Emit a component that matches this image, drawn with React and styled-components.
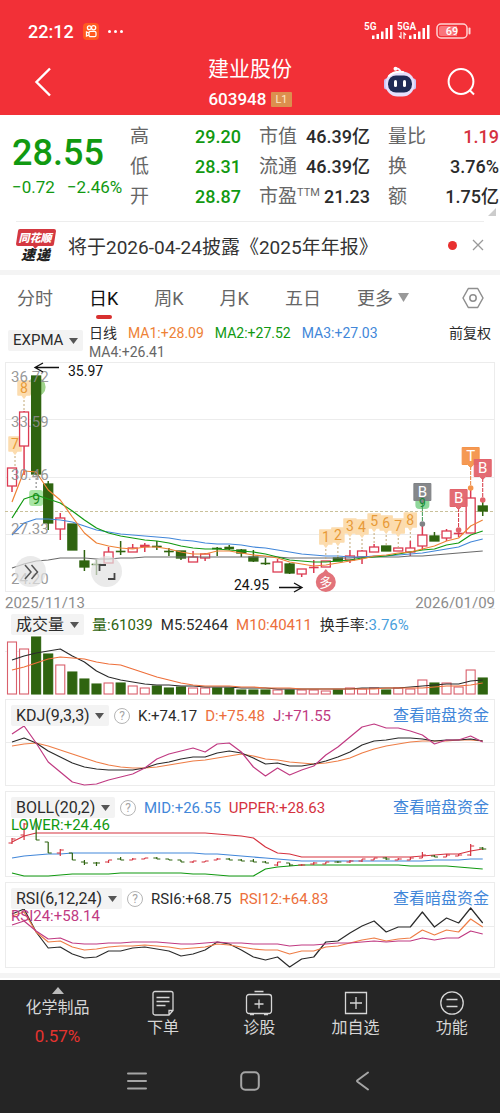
import React, { useState } from "react";
import styled, { createGlobalStyle } from "styled-components";

const GREEN = "#119911";
const DEEP_GREEN = "#2f6410";
const RED = "#d5323f";
const CANDLE_RED = "#dc3b52";
const ORANGE = "#ee8236";
const BLUE = "#4287d9";
const PURPLE = "#c03a82";
const DARK = "#2b2b2b";

const STEP = 12.07;
const xAt = (i) => 12 + i * STEP;
const toPoints = (values) => values.map((y, i) => `${xAt(i)},${y}`).join(" ");

// [direction, high, body top, body bottom, low]
const candles = [
  ["up", 468, 468, 486, 492], ["up", 411, 412, 446, 475], ["down", 376, 376, 474, 474],
  ["down", 481, 484, 523, 530], ["up", 513, 518, 529, 540], ["down", 524, 524, 550, 550],
  ["down", 550, 561, 567, 571], ["down", 560, 564, 565, 575], ["up", 547, 552, 563, 563],
  ["down", 541, 551, 552, 555], ["up", 544, 548, 552, 552], ["up", 543, 545, 547, 552],
  ["down", 541, 546, 547, 550], ["down", 548, 551, 552, 556], ["down", 551, 551, 558, 560],
  ["up", 551, 557, 562, 562], ["up", 553, 554, 558, 561], ["down", 547, 548, 549, 556],
  ["down", 545, 547, 549, 550], ["down", 549, 550, 553, 557], ["down", 550, 557, 561, 562],
  ["down", 558, 563, 564, 565], ["up", 559, 562, 572, 572], ["down", 563, 564, 573, 574],
  ["up", 569, 569, 574, 577], ["up", 560, 567, 568, 573], ["up", 561, 561, 567, 567],
  ["down", 557, 558, 561, 561], ["up", 550, 556, 560, 563], ["up", 550, 551, 557, 564],
  ["up", 544, 547, 552, 552], ["down", 546, 546, 551, 551], ["up", 548, 548, 551, 551],
  ["up", 541, 548, 552, 556], ["up", 524, 535, 546, 550], ["down", 532, 536, 541, 541],
  ["up", 529, 531, 538, 541], ["up", 529, 533, 534, 537], ["up", 488, 498, 533, 533],
  ["down", 500, 506, 511, 516],
];

const ma1 = [502, 471, 472, 490, 500, 517, 533, 543, 546, 548, 549, 547, 547, 549, 552, 554, 554, 551, 551, 553, 555, 556, 558, 562, 564, 566, 565, 563, 561, 559, 556, 555, 553, 552, 549, 546, 541, 538, 526, 520];
const ma2 = [518, 499, 495, 499, 503, 511, 520, 528, 533, 536, 538, 540, 541, 543, 546, 548, 549, 549, 550, 551, 552, 554, 557, 560, 561, 562, 562, 561, 560, 558, 557, 556, 554, 552, 550, 549, 545, 543, 535, 531];
const ma3 = [535, 523, 519, 519, 520, 522, 526, 530, 532, 534, 535, 536, 537, 538, 540, 541, 543, 544, 544, 545, 547, 548, 550, 552, 554, 555, 556, 556, 557, 557, 556, 556, 555, 554, 553, 551, 549, 547, 542, 539];
const ma4 = [568, 564, 561, 560, 558, 558, 558, 559, 559, 558, 558, 557, 557, 557, 557, 557, 557, 557, 557, 557, 557, 557, 557, 558, 558, 558, 558, 558, 558, 557, 557, 557, 557, 556, 556, 555, 554, 553, 552, 551];

const volumes = [642, 649, 637, 654, 665, 672, 679, 684, 683, 683, 686, 688, 686, 688, 687, 688, 688, 688, 688, 690, 690, 690, 690, 690, 690, 690, 691, 690, 688, 689, 688, 690, 688, 689, 680, 683, 683, 687, 670, 678];
const volM5 = [660, 656, 653, 651, 649, 656, 662, 671, 677, 680, 682, 684, 685, 685, 686, 686, 687, 687, 687, 688, 688, 688, 689, 689, 689, 689, 689, 689, 689, 688, 688, 688, 688, 687, 686, 685, 684, 684, 681, 680];
const volM10 = [670, 667, 663, 659, 657, 658, 659, 662, 664, 665, 669, 673, 677, 680, 683, 685, 686, 686, 686, 687, 687, 688, 688, 688, 689, 689, 689, 689, 689, 689, 689, 688, 688, 688, 688, 687, 686, 686, 685, 683];

const kLine = [742, 738, 743, 751, 757, 763, 767, 769, 770, 770, 770, 768, 764, 762, 759, 757, 757, 753, 751, 753, 758, 764, 763, 766, 766, 764, 761, 757, 752, 745, 741, 740, 738, 738, 739, 741, 740, 740, 739, 741];
const dLine = [746, 744, 743, 746, 750, 754, 758, 762, 765, 767, 768, 768, 767, 765, 763, 761, 760, 758, 756, 754, 756, 759, 760, 762, 763, 764, 763, 761, 758, 753, 749, 746, 744, 742, 741, 741, 741, 740, 740, 741];
const jLine = [734, 726, 743, 762, 772, 782, 785, 784, 780, 777, 774, 768, 759, 754, 751, 748, 752, 744, 743, 752, 767, 776, 768, 775, 770, 766, 755, 747, 737, 727, 724, 728, 728, 731, 735, 744, 740, 740, 736, 742];

const bollUpper = [842, 836, 833, 833, 833, 833, 833, 833, 833, 833, 833, 833, 833, 833, 833, 833, 833, 834, 835, 836, 838, 847, 853, 854, 857, 857, 857, 857, 857, 857, 857, 857, 857, 857, 856, 855, 854, 854, 851, 849];
const bollMid = [858, 856, 855, 854, 854, 853, 853, 853, 853, 853, 853, 853, 853, 853, 853, 853, 854, 854, 855, 856, 857, 858, 859, 860, 861, 861, 861, 861, 861, 861, 861, 861, 861, 861, 861, 860, 860, 860, 859, 859];
const bollLower = [873, 876, 876, 876, 875, 874, 874, 874, 874, 873, 873, 873, 873, 873, 873, 874, 874, 875, 876, 876, 876, 869, 867, 866, 865, 865, 865, 865, 865, 865, 865, 865, 865, 866, 866, 866, 866, 867, 868, 869];
// [direction, high, low, open, close]
const bollBars = [
  ["up", 838, 844, 843, 839], ["up", 823, 840, 835, 824], ["down", 815, 840, 816, 840],
  ["down", 842, 853, 842, 853], ["up", 849, 856, 853, 850], ["down", 853, 860, 853, 860],
  ["down", 860, 865, 862, 863], ["down", 862, 866, 863, 863], ["up", 860, 863, 862, 860],
  ["down", 857, 860, 859, 860], ["up", 858, 860, 860, 859], ["up", 858, 859, 859, 858],
  ["down", 857, 859, 858, 859], ["down", 859, 860, 859, 860], ["down", 860, 862, 860, 862],
  ["up", 861, 863, 862, 861], ["up", 861, 862, 862, 861], ["up", 858, 860, 860, 859],
  ["down", 858, 860, 859, 860], ["down", 859, 861, 860, 861], ["down", 859, 862, 861, 862],
  ["down", 861, 863, 862, 863], ["up", 862, 866, 865, 862], ["down", 863, 866, 863, 865],
  ["up", 864, 866, 865, 865], ["up", 862, 865, 864, 863], ["up", 862, 864, 864, 862],
  ["down", 861, 863, 862, 862], ["up", 860, 863, 862, 861], ["up", 859, 862, 861, 859],
  ["up", 858, 860, 860, 858], ["down", 857, 860, 858, 859], ["up", 858, 860, 860, 859],
  ["up", 857, 860, 860, 858], ["up", 852, 858, 858, 855], ["down", 855, 857, 856, 857],
  ["up", 854, 857, 857, 855], ["up", 854, 856, 856, 855], ["up", 844, 856, 855, 846],
  ["down", 847, 850, 848, 849],
];

const rsi6 = [914, 909, 932, 948, 947, 954, 958, 957, 951, 951, 948, 947, 949, 951, 956, 954, 950, 942, 944, 950, 957, 960, 957, 967, 959, 957, 942, 941, 933, 926, 921, 932, 927, 927, 912, 927, 918, 923, 908, 923];
const rsi12 = [916, 912, 932, 942, 941, 947, 950, 949, 947, 946, 946, 945, 946, 947, 949, 948, 947, 944, 945, 947, 949, 950, 950, 954, 951, 951, 947, 946, 943, 940, 938, 941, 939, 938, 930, 935, 930, 932, 919, 927];
const rsi24 = [925, 921, 931, 939, 938, 943, 944, 944, 943, 943, 942, 942, 942, 943, 944, 944, 943, 942, 943, 943, 944, 944, 944, 946, 945, 945, 944, 943, 943, 942, 941, 942, 941, 941, 938, 940, 938, 938, 931, 934];

const counts = [
  { i: 26, n: 1, y: 537 }, { i: 27, n: 2, y: 535 }, { i: 28, n: 3, y: 526 }, { i: 29, n: 4, y: 527 },
  { i: 30, n: 5, y: 521 }, { i: 31, n: 6, y: 523 }, { i: 32, n: 7, y: 526 }, { i: 33, n: 8, y: 520 },
];

const flags = [
  { i: 34, label: "B", y: 492, dot: 524, color: "#7f8285", line: "#3f9a55" },
  { i: 37, label: "B", y: 498, dot: 530, color: "#e2636b", line: "#d5323f" },
  { i: 38, label: "T", y: 456, dot: 488, color: "#f4944a", line: "#e8823c" },
  { i: 39, label: "B", y: 468, dot: 500, color: "#e2636b", line: "#d5323f" },
];

const quoteRows = [
  ["高", "29.20", GREEN], ["市值", "46.39亿"], ["量比", "1.19", RED],
  ["低", "28.31", GREEN], ["流通", "46.39亿"], ["换", "3.76%"],
  ["开", "28.87", GREEN], ["市盈", "21.23"], ["额", "1.75亿"],
];

const tabs = ["分时", "日K", "周K", "月K", "五日"];

export default function App() {
  const [activeTab, setActiveTab] = useState("日K");

  return (
    <Page>
      <GlobalStyle />
      <Header>
        <StatusBar>
          <Clock>22:12</Clock>
          <CameraIcon />
          <Dots>
            <i />
            <i />
            <i />
          </Dots>
          <StatusRight>
            <SignalIcon />
            <BatteryIcon />
          </StatusRight>
        </StatusBar>
        <TitleBar>
          <BackButton aria-label="返回">
            <svg width="18" height="30" viewBox="0 0 18 30" fill="none" stroke="#fff" strokeWidth="2.4">
              <path d="M16 1.5 2.5 15 16 28.5" />
            </svg>
          </BackButton>
          <TitleBlock>
            <StockName>建业股份</StockName>
            <StockCode>
              603948<Level>L1</Level>
            </StockCode>
          </TitleBlock>
          <TitleActions>
            <IconButton aria-label="智能助手">
              <RobotIcon />
            </IconButton>
            <IconButton aria-label="搜索">
              <svg width="30" height="30" viewBox="0 0 30 30" fill="none" stroke="#fff" strokeWidth="2">
                <circle cx="15" cy="14.5" r="12.4" />
                <path d="m23.500 23 4.500 4.500" />
              </svg>
            </IconButton>
          </TitleActions>
        </TitleBar>
      </Header>

      <Quote>
        <PriceBlock>
          <Price>28.55</Price>
          <Change>
            <span>−0.72</span>
            <span>−2.46%</span>
          </Change>
        </PriceBlock>
        <Stats>
          {quoteRows.map(([label, value, color]) => (
            <Stat key={label}>
              <StatLabel>
                {label}
                {label === "市盈" && <sup>TTM</sup>}
              </StatLabel>
              <StatValue $color={color}>{value}</StatValue>
            </Stat>
          ))}
        </Stats>
        <Corner />
      </Quote>

      <News>
        <NewsLogo />
        <NewsLink href="#news">将于2026-04-24披露《2025年年报》</NewsLink>
        <RedDot />
        <button aria-label="关闭">
          <svg width="12" height="12" viewBox="0 0 12 12" stroke="#999" strokeWidth="1.3">
            <path d="m1 1 10 10M11 1 1 11" />
          </svg>
        </button>
      </News>
      <Divider />

      <Tabs>
        {tabs.map((tab) => (
          <Tab key={tab} $active={tab === activeTab} onClick={() => setActiveTab(tab)}>
            {tab}
          </Tab>
        ))}
        <Tab aria-haspopup="menu">
          更多
          <Caret width="11" height="9" viewBox="0 0 11 9" fill="#999">
            <path d="M0 0h11L5.500 9z" />
          </Caret>
        </Tab>
        <Settings aria-label="设置">
          <svg width="22" height="22" viewBox="0 0 22 22" fill="none" stroke="#8e8e8e" strokeWidth="1.5">
            <path d="M6.300 1.500h9.400L21 11l-5.300 9.500H6.300L1 11z" strokeLinejoin="round" />
            <circle cx="11" cy="11" r="3.200" />
          </svg>
        </Settings>
      </Tabs>

      <IndicatorRow>
        <Picker name="EXPMA" />
        <Averages>
          <Value $color={DARK}>日线</Value>
          <Value $color={ORANGE}>MA1:+28.09</Value>
          <Value $color={GREEN}>MA2:+27.52</Value>
          <Value $color={BLUE}>MA3:+27.03</Value>
          <Value $color="#666">MA4:+26.41</Value>
        </Averages>
        <Adjust>前复权</Adjust>
      </IndicatorRow>

      <MainPanel>
        <CandleChart />
        <RoundButton $left={10} aria-label="展开">
          <svg width="18" height="18" viewBox="0 0 18 18" fill="none" stroke="#555" strokeWidth="1.5">
            <path d="m3 2 6 7-6 7M9.500 2l6 7-6 7" />
          </svg>
        </RoundButton>
        <RoundButton $left={86} aria-label="全屏">
          <svg width="18" height="18" viewBox="0 0 18 18" fill="none" stroke="#444" strokeWidth="1.800">
            <path d="M1.500 8V2H8M16.500 10v6H10" />
          </svg>
        </RoundButton>
      </MainPanel>
      <Dates>
        <span>2025/11/13</span>
        <span>2026/01/09</span>
      </Dates>

      <Panel>
        <VolumeChart />
        <PanelHead>
          <Legend>
            <Picker name="成交量" large />
            <Value $color={DEEP_GREEN} $large>量:61039</Value>
            <Value $color={DARK} $large>M5:52464</Value>
            <Value $color="#ec6f3c" $large>M10:40411</Value>
            <Value $color={DARK} $large>
              换手率:<Rate>3.76%</Rate>
            </Value>
          </Legend>
        </PanelHead>
      </Panel>

      <IndicatorPanel
        name="KDJ(9,3,3)"
        values={[["K:+74.17", DARK], ["D:+75.48", "#ec6f3c"], ["J:+71.55", PURPLE]]}
      >
        <Chart viewBox="5 699 490 87">
          <GridLine y={742} />
          <Line values={dLine} color="#ee7d46" />
          <Line values={kLine} color={DARK} />
          <Line values={jLine} color={PURPLE} />
        </Chart>
      </IndicatorPanel>

      <IndicatorPanel
        name="BOLL(20,2)"
        values={[["MID:+26.55", BLUE], ["UPPER:+28.63", RED], ["LOWER:+24.46", GREEN]]}
      >
        <Chart viewBox="5 791 490 86">
          <GridLine y={836} />
          <Line values={bollUpper} color={RED} />
          <Line values={bollMid} color={BLUE} />
          <Line values={bollLower} color={GREEN} />
          {bollBars.map(([dir, high, low, open, close], i) => (
            <path
              key={i}
              d={`M${xAt(i)} ${high}V${low}M${xAt(i) - 3.5} ${open}H${xAt(i)}M${xAt(i)} ${close}H${xAt(i) + 3.5}`}
              stroke={dir === "up" ? RED : DEEP_GREEN}
              strokeWidth="1.2"
            />
          ))}
        </Chart>
      </IndicatorPanel>

      <IndicatorPanel
        name="RSI(6,12,24)"
        values={[["RSI6:+68.75", DARK], ["RSI12:+64.83", "#ec6f3c"], ["RSI24:+58.14", PURPLE]]}
      >
        <Chart viewBox="5 882 490 86">
          <GridLine y={926} />
          <Line values={rsi6} color={DARK} />
          <Line values={rsi12} color="#ee7d46" />
          <Line values={rsi24} color={PURPLE} />
        </Chart>
      </IndicatorPanel>
      <BottomStrip />

      <Footer>
        <ActionBar>
          <Sector>
            <svg width="12" height="7" viewBox="0 0 12 7" fill="#bbb">
              <path d="M6 0l6 7H0z" />
            </svg>
            <span>化学制品</span>
            <SectorRate>0.57%</SectorRate>
          </Sector>
          <Action>
            <svg width="24" height="26" viewBox="0 0 24 26">
              <path d="M4 1.500h16a2 2 0 0 1 2 2v17L18 25H4a2 2 0 0 1-2-2V3.500a2 2 0 0 1 2-2zM22 20.500h-4V25M5.500 7.500h13M5.500 11.500h13M5.500 15.500h9" />
            </svg>
            下单
          </Action>
          <Action>
            <svg width="28" height="26" viewBox="0 0 28 26">
              <path d="M9.500 1.500h9M4 4.500h20a2.500 2.500 0 0 1 2.500 2.500v14a2.500 2.500 0 0 1-2.500 2.500H4A2.500 2.500 0 0 1 1.500 21V7A2.500 2.500 0 0 1 4 4.500zM5 24.500h4M19 24.500h4M14 9.500v9M9.500 14h9" />
            </svg>
            诊股
          </Action>
          <Action>
            <svg width="24" height="26" viewBox="0 0 24 26">
              <path d="M1.500 2.500h21v21h-21zM12 7v12M6 13h12" />
            </svg>
            加自选
          </Action>
          <Action>
            <svg width="26" height="26" viewBox="0 0 26 26">
              <circle cx="13" cy="13" r="11.200" />
              <path d="M7.500 9.500h11M7.500 16.500h11" />
            </svg>
            功能
          </Action>
        </ActionBar>
        <SystemNav>
          <button aria-label="最近任务">
            <svg width="20" height="20" viewBox="0 0 20 20">
              <path d="M1 2.500h18M1 10h18M1 17.500h18" />
            </svg>
          </button>
          <button aria-label="主屏幕">
            <svg width="20" height="20" viewBox="0 0 20 20">
              <rect x="1.200" y="1.200" width="17.600" height="17.600" rx="4" />
            </svg>
          </button>
          <button aria-label="后退">
            <svg width="20" height="20" viewBox="0 0 20 20">
              <path d="M15 1.500 4.500 9.200q-1 .8 0 1.600L15 18.500" />
            </svg>
          </button>
        </SystemNav>
      </Footer>
    </Page>
  );
}

function Picker({ name, large }) {
  return (
    <PickerBox>
      <PickerSelect aria-label={name} $large={large}>
        <option>{name}</option>
      </PickerSelect>
      <svg width="9" height="6" viewBox="0 0 9 6" fill="#555">
        <path d="M0 0h9L4.500 6z" />
      </svg>
    </PickerBox>
  );
}

function IndicatorPanel({ name, values, children }) {
  return (
    <Panel $framed>
      {children}
      <PanelHead>
        <Legend>
          <Picker name={name} large />
          <Help aria-label="说明">?</Help>
          {values.map(([text, color]) => (
            <Value key={text} $color={color} $large>
              {text}
            </Value>
          ))}
        </Legend>
        <FundLink href="#fund">查看暗盘资金</FundLink>
      </PanelHead>
    </Panel>
  );
}

const Line = ({ values, color }) => (
  <polyline points={toPoints(values)} fill="none" stroke={color} strokeWidth="1.2" strokeLinejoin="round" />
);

const GridLine = ({ y }) => <path d={`M5 ${y + 0.5}H495`} stroke="#ececec" strokeWidth="1" />;

function CandleChart() {
  return (
    <Chart viewBox="5 362 490 230">
      <GridLine y={419} />
      <GridLine y={477} />
      <GridLine y={534} />
      <path d="M5 511.500H495" stroke="#c9c09a" strokeWidth="1" strokeDasharray="3 2" />

      <circle cx={xAt(2)} cy="387" r="9.500" fill="#9fd38c" />
      <CountBadge x={15} y={444} n={7} bottom={468} />
      <CountBadge x={24} y={388} n={8} bottom={411} />
      <path d={`M${xAt(2)} 474V490`} stroke="#777" strokeDasharray="2 2" />
      <rect x={xAt(2) - 7} y="490" width="14" height="16" rx="3" fill="#a9e6a4" />
      <text x={xAt(2)} y="504" fontSize="14" fill="#1d8a1d" textAnchor="middle">9</text>

      {candles.map(([dir, high, top, bottom, low], i) => {
        const up = dir === "up";
        const color = up ? CANDLE_RED : DEEP_GREEN;
        const thin = bottom - top < 3;
        return (
          <g key={i}>
            <path d={`M${xAt(i)} ${high}V${top}M${xAt(i)} ${bottom}V${low}`} stroke={color} strokeWidth="1.5" />
            <rect
              x={xAt(i) - 4.5}
              y={top}
              width="9"
              height={bottom - top}
              fill={up && !thin ? "#fff" : color}
              stroke={color}
              strokeWidth={thin ? 0.6 : 1.3}
            />
          </g>
        );
      })}

      <Line values={ma4} color="#6a6a6a" />
      <Line values={ma3} color={BLUE} />
      <Line values={ma2} color={GREEN} />
      <Line values={ma1} color={ORANGE} />

      {counts.map(({ i, n, y }) => (
        <CountBadge key={i} x={xAt(i)} y={y} n={n} bottom={candles[i][1]} />
      ))}

      <rect x={xAt(34) - 7} y="496" width="14" height="13" rx="4" fill="#8fd79b" />
      {flags.map(({ i, label, y, dot, color, line }) => (
        <g key={i}>
          <path d={`M${xAt(i)} ${y + 10}V${dot}`} stroke={line} strokeDasharray="4 1" />
          <circle cx={xAt(i)} cy={dot} r="2.800" fill={color} />
          <path
            d={`M${xAt(i) - 8.5} ${y - 8.5}h17v17h-5.500l-3 3-3-3h-5.500z`}
            fill={color}
            stroke={color}
            strokeLinejoin="round"
            fillOpacity="0.95"
          />
          <text x={xAt(i)} y={y + 5} fontSize="15" fill="#fff" textAnchor="middle">{label}</text>
        </g>
      ))}
      <text x={xAt(34)} y="507" fontSize="12" fill="#148a35" textAnchor="middle">9</text>

      <path d={`M${xAt(26)} 569l4 5h-8z`} fill="#e2737a" />
      <circle cx={xAt(26)} cy="582" r="10" fill="#e2737a" />
      <text x={xAt(26)} y="587" fontSize="13" fill="#fff" textAnchor="middle">多</text>

      {[["36.72", 382], ["33.59", 427], ["30.46", 480], ["27.33", 534], ["24.20", 584]].map(([text, y]) => (
        <text key={text} x="11" y={y} fontSize="15" fill="#8c8c8c" fillOpacity="0.9">{text}</text>
      ))}

      <text x="68" y="376" fontSize="14" fill="#111">35.97</text>
      <path d="M59 367.500H36M43 363l-8 4.500 8 4.500" fill="none" stroke="#111" strokeWidth="1.3" />
      <text x="234" y="590" fontSize="14" fill="#111">24.95</text>
      <path d="M279 587.500H301M294 583l8 4.500-8 4.500" fill="none" stroke="#111" strokeWidth="1.3" />
    </Chart>
  );
}

function CountBadge({ x, y, n, bottom }) {
  return (
    <g>
      <path d={`M${x} ${y + 8}V${bottom}`} stroke="#c2a877" strokeDasharray="2 2" />
      <path
        d={`M${x - 6} ${y - 7}h12v14h-4l-2 3-2-3h-4z`}
        fill="#fcdcae"
        stroke="#fcdcae"
        strokeWidth="1.500"
        strokeLinejoin="round"
      />
      <text x={x} y={y + 5} fontSize="14" fill="#e89a37" textAnchor="middle">{n}</text>
    </g>
  );
}

function VolumeChart() {
  return (
    <Chart viewBox="5 608 490 87">
      <GridLine y={608} />
      <GridLine y={651} />
      {volumes.map((top, i) => {
        const up = candles[i][0] === "up";
        const color = up ? "#d9606c" : DEEP_GREEN;
        return (
          <rect
            key={i}
            x={xAt(i) - 4.5}
            y={top}
            width="9"
            height={694 - top}
            fill={up ? "#fff" : color}
            stroke={color}
            strokeWidth="1.1"
          />
        );
      })}
      <Line values={volM5} color={DARK} />
      <Line values={volM10} color="#ee6f3a" />
    </Chart>
  );
}

const CameraIcon = () => (
  <svg width="16" height="17" viewBox="0 0 16 17" fill="none">
    <rect width="16" height="17" rx="4" fill="#ff5a1f" />
    <g stroke="#fff" strokeWidth="1.3">
      <circle cx="6.300" cy="4.800" r="1.900" />
      <circle cx="10.600" cy="4.800" r="2.100" />
      <rect x="6" y="8.300" width="7" height="5.400" rx="1.500" />
      <path d="M6 10 3.500 8.900v4.200L6 12" />
    </g>
  </svg>
);

const SignalIcon = () => (
  <svg width="68" height="18" viewBox="0 0 68 18" fill="#fff">
    <text x="0" y="8" fontSize="10" fontWeight="600">5G</text>
    <text x="33" y="8" fontSize="10" fontWeight="600">5GA</text>
    <path d="M8 13.500h2.500V17H8zM12.500 12H15v5h-2.500zM17 9.500h2.500V17H17zM21.500 6H24v11h-2.500zM26 3h2.500v14H26z" />
    <path d="M45 13.500h2.500V17H45zM49.500 12H52v5h-2.500zM54 9.500h2.500V17H54zM58.500 6H61v11h-2.500zM63 3h2.500v14H63z" />
    <path d="M37 10v6l-2-2M40 17v-6l2 2" fill="none" stroke="#fff" strokeWidth="1.100" />
  </svg>
);

const BatteryIcon = () => (
  <svg width="36" height="16" viewBox="0 0 36 16" fill="none">
    <rect x="1" y="1" width="30" height="14" rx="4" stroke="#ffd3d3" strokeWidth="1.500" />
    <path d="M5 3h16v10H5a2 2 0 0 1-2-2V5a2 2 0 0 1 2-2z" fill="#f9757b" />
    <path d="M33.500 5.500v5" stroke="#ffd3d3" strokeWidth="2" strokeLinecap="round" />
    <text x="16" y="12" fontSize="11" fontWeight="500" fill="#fff" textAnchor="middle">69</text>
  </svg>
);

const RobotIcon = () => (
  <svg width="34" height="32" viewBox="0 0 34 32" fill="none">
    <path d="M17.500 7q0-4-4-4.500" stroke="#f3efff" strokeWidth="2" />
    <circle cx="12.500" cy="2.800" r="2" fill="#fff" />
    <rect x="1" y="12.500" width="5" height="11" rx="2.500" fill="#c9c2f6" />
    <rect x="28" y="12.500" width="5" height="11" rx="2.500" fill="#c9c2f6" />
    <rect x="2.500" y="5.500" width="29" height="25" rx="12" fill="#e6dffc" />
    <path d="M6 10q5-5 14-4" stroke="#fff" strokeWidth="2" strokeLinecap="round" />
    <rect x="5" y="9.500" width="24" height="17" rx="8" fill="#1f2a55" />
    <rect x="11" y="14" width="3" height="7" rx="1.500" fill="#fff" />
    <rect x="20" y="14" width="3" height="7" rx="1.500" fill="#fff" />
  </svg>
);

const NewsLogo = () => (
  <svg width="40" height="34" viewBox="0 0 40 34" fontWeight="900" fontStyle="italic">
    <path d="M4 1h34q2 0 2 2l-2 13q0 2-2 2H22l-3 3-2-3H2q-2 0-2-2L2 3q0-2 2-2z" fill="#d43840" />
    <text x="19" y="14" fontSize="11" fill="#fff" textAnchor="middle">同花顺</text>
    <text x="5" y="32" fontSize="14" fill="#222">速</text>
    <text x="20" y="32" fontSize="14" fill="#222">递</text>
  </svg>
);

const GlobalStyle = createGlobalStyle`
  * {
    box-sizing: border-box;
  }
  body {
    margin: 0;
    background: #fff;
    font-family: Roboto, "Noto Sans CJK SC", sans-serif;
    color: ${DARK};
  }
  button {
    padding: 0;
    border: none;
    background: none;
    font-family: inherit;
    color: inherit;
    cursor: pointer;
  }
  svg {
    display: block;
  }
`;

const Page = styled.div`
  display: flex;
  flex-direction: column;
  min-height: 100vh;
`;

const Header = styled.header`
  padding: 18px 22px 0;
  background: #f23037;
  color: #fff;
`;

const StatusBar = styled.div`
  display: flex;
  align-items: center;
  gap: 9px;
  height: 26px;
  padding: 0 6px;
`;

const Clock = styled.span`
  font-size: 18px;
  font-weight: 500;
`;

const Dots = styled.span`
  display: flex;
  gap: 3px;

  i {
    width: 3px;
    height: 3px;
    border-radius: 50%;
    background: #fff;
  }
`;

const StatusRight = styled.div`
  display: flex;
  align-items: center;
  gap: 4px;
  margin-left: auto;
`;

const TitleBar = styled.div`
  display: grid;
  grid-template-columns: 1fr auto 1fr;
  align-items: center;
  height: 71px;
  padding-top: 5px;
`;

const IconButton = styled.button`
  padding: 0 2px;
`;

const BackButton = styled.button`
  justify-self: start;
  padding: 0 12px;
`;

const TitleBlock = styled.div`
  display: flex;
  flex-direction: column;
  align-items: center;
  gap: 4px;
`;

const StockName = styled.h1`
  margin: 0;
  font-size: 21px;
  font-weight: 400;
  line-height: 30px;
`;

const StockCode = styled.div`
  display: flex;
  align-items: center;
  gap: 5px;
  font-size: 17px;
  font-weight: 500;
  line-height: 22px;
`;

const Level = styled.span`
  padding: 0 4px;
  border-radius: 1px;
  background: #dc8f4e;
  color: #ffe9c9;
  font-size: 11px;
  font-weight: 400;
  line-height: 15px;
`;

const TitleActions = styled.div`
  display: flex;
  align-items: center;
  justify-content: flex-end;
  gap: 25px;
`;

const Quote = styled.section`
  position: relative;
  display: grid;
  grid-template-columns: 118px 1fr;
  padding: 8px 1px 8px 12px;
`;

const PriceBlock = styled.div`
  display: flex;
  flex-direction: column;
  gap: 3px;
  padding-top: 10px;
  color: ${GREEN};
`;

const Price = styled.div`
  font-size: 36px;
  font-weight: 500;
  line-height: 40px;
`;

const Change = styled.div`
  display: flex;
  gap: 12px;
  font-size: 17px;
  line-height: 22px;
  white-space: nowrap;
`;

const Stats = styled.dl`
  display: grid;
  grid-template-columns: repeat(3, 1fr);
  column-gap: 18px;
  margin: 0;
`;

const Stat = styled.div`
  display: flex;
  align-items: baseline;
  justify-content: space-between;
  height: 30px;
  white-space: nowrap;
`;

const StatLabel = styled.dt`
  color: #666;
  font-size: 19px;
  line-height: 28px;

  sup {
    font-size: 11px;
    line-height: 1;
  }
`;

const StatValue = styled.dd`
  margin: 0;
  color: ${(props) => props.$color || DARK};
  font-size: 18px;
  font-weight: 500;
  line-height: 28px;
`;

const Corner = styled.span`
  position: absolute;
  right: 4px;
  bottom: 5px;
  border-left: 8px solid transparent;
  border-bottom: 8px solid #ccc;
`;

const News = styled.section`
  display: flex;
  align-items: center;
  height: 49px;
  margin: 0 16px;
  padding-bottom: 2px;
  border-top: 1px solid #ededed;
`;

const NewsLink = styled.a`
  flex: 1;
  margin-left: 12px;
  color: #333;
  font-size: 19px;
  text-decoration: none;
  white-space: nowrap;
`;

const RedDot = styled.span`
  width: 9px;
  height: 9px;
  margin-right: 15px;
  border-radius: 50%;
  background: #e8302f;
`;

const Divider = styled.div`
  height: 5px;
  background: #f4f4f4;
`;

const Tabs = styled.nav`
  display: flex;
  align-items: center;
  gap: 36px;
  height: 46px;
  padding: 0 16px 0 17px;
`;

const Tab = styled.button`
  position: relative;
  display: flex;
  align-items: center;
  height: 46px;
  padding-bottom: 2px;
  color: ${(props) => (props.$active ? "#111" : "#666")};
  font-size: 18px;
  white-space: nowrap;

  &::after {
    content: "";
    display: ${(props) => (props.$active ? "block" : "none")};
    position: absolute;
    bottom: 2px;
    left: calc(50% - 8px);
    width: 16px;
    height: 4px;
    border-radius: 2px;
    background: #d8302f;
  }
`;

const Caret = styled.svg`
  margin-left: 5px;
`;

const Settings = styled.button`
  margin-left: auto;
`;

const IndicatorRow = styled.div`
  display: flex;
  align-items: flex-start;
  height: 41px;
  padding: 3px 9px 0 8px;

  > :first-child {
    margin-top: 6px;
  }
`;

const PickerBox = styled.span`
  display: inline-flex;
  align-items: center;
  gap: 5px;
  height: 21px;
  padding: 0 5px;
  border-radius: 2px;
  background: #f3f3f3;
`;

const PickerSelect = styled.select`
  appearance: none;
  padding: 0;
  border: none;
  background: none;
  color: ${DARK};
  font-family: inherit;
  font-size: ${(props) => (props.$large ? "16px" : "15px")};
  line-height: 21px;
`;

const Averages = styled.div`
  display: flex;
  flex: 1;
  flex-wrap: wrap;
  column-gap: 11px;
  margin-left: 6px;
`;

const Value = styled.span`
  color: ${(props) => props.$color};
  font-size: ${(props) => (props.$large ? "15px" : "14px")};
  line-height: ${(props) => (props.$large ? "14px" : "19px")};
  white-space: nowrap;
`;

const Rate = styled.span`
  color: #4a9fdc;
`;

const Adjust = styled.span`
  font-size: 14px;
  line-height: 19px;
`;

const Panel = styled.section`
  position: relative;
  display: grid;
  margin: 0 5px ${(props) => (props.$framed ? "5px" : "4px")};
  box-shadow: ${(props) => (props.$framed ? "inset 0 0 0 1px #ececec" : "none")};

  > * {
    grid-area: 1 / 1;
  }
`;

const MainPanel = styled(Panel)`
  margin-bottom: 0;
  box-shadow: inset 0 0 0 1px #ececec;
`;

const Chart = styled.svg`
  width: 100%;
  height: auto;
  overflow: visible;
`;

const RoundButton = styled.button`
  position: absolute;
  bottom: 5px;
  left: ${(props) => props.$left}px;
  display: grid;
  place-items: center;
  width: 31px;
  height: 31px;
  border-radius: 50%;
  background: rgba(225, 225, 225, 0.7);
`;

const Dates = styled.div`
  display: flex;
  justify-content: space-between;
  height: 16px;
  padding: 0 5px;
  color: #8c8c8c;
  font-size: 15px;
  line-height: 22px;
`;

const PanelHead = styled.div`
  display: flex;
  align-items: flex-start;
  z-index: 1;
  padding: 6px 6px 0;
`;

const Legend = styled.div`
  display: flex;
  flex: 1;
  flex-wrap: wrap;
  align-items: center;
  align-content: flex-start;
  column-gap: 8px;
`;

const Help = styled.button`
  width: 16px;
  height: 16px;
  margin-left: -3px;
  border: 1px solid #b5b5b5;
  border-radius: 50%;
  color: #a5a5a5;
  font-size: 12px;
  line-height: 14px;
`;

const FundLink = styled.a`
  color: ${BLUE};
  font-size: 16px;
  line-height: 21px;
  text-decoration: none;
  white-space: nowrap;
`;

const BottomStrip = styled.div`
  height: 5px;
  margin-bottom: 2px;
  background: #f4f4f4;
`;

const Footer = styled.footer`
  flex: 1;
  background: #252525;
  color: #d6d6d6;
`;

const ActionBar = styled.nav`
  display: grid;
  grid-template-columns: 115px repeat(4, 1fr);
  height: 70px;
`;

const Sector = styled.button`
  display: flex;
  flex-direction: column;
  align-items: center;
  padding-top: 7px;
  font-size: 16px;
  line-height: 28px;
`;

const SectorRate = styled.span`
  color: #e5332f;
  font-size: 17px;
`;

const Action = styled.button`
  display: flex;
  flex-direction: column;
  align-items: center;
  padding-top: 10px;
  font-size: 16px;
  line-height: 24px;

  svg {
    fill: none;
    stroke: #d6d6d6;
    stroke-width: 1.3;
  }
`;

const SystemNav = styled.nav`
  display: flex;
  justify-content: center;
  gap: 93px;
  padding: 21px 0 22px;

  svg {
    fill: none;
    stroke: #a5a5a5;
    stroke-width: 2;
    stroke-linecap: round;
  }
`;
